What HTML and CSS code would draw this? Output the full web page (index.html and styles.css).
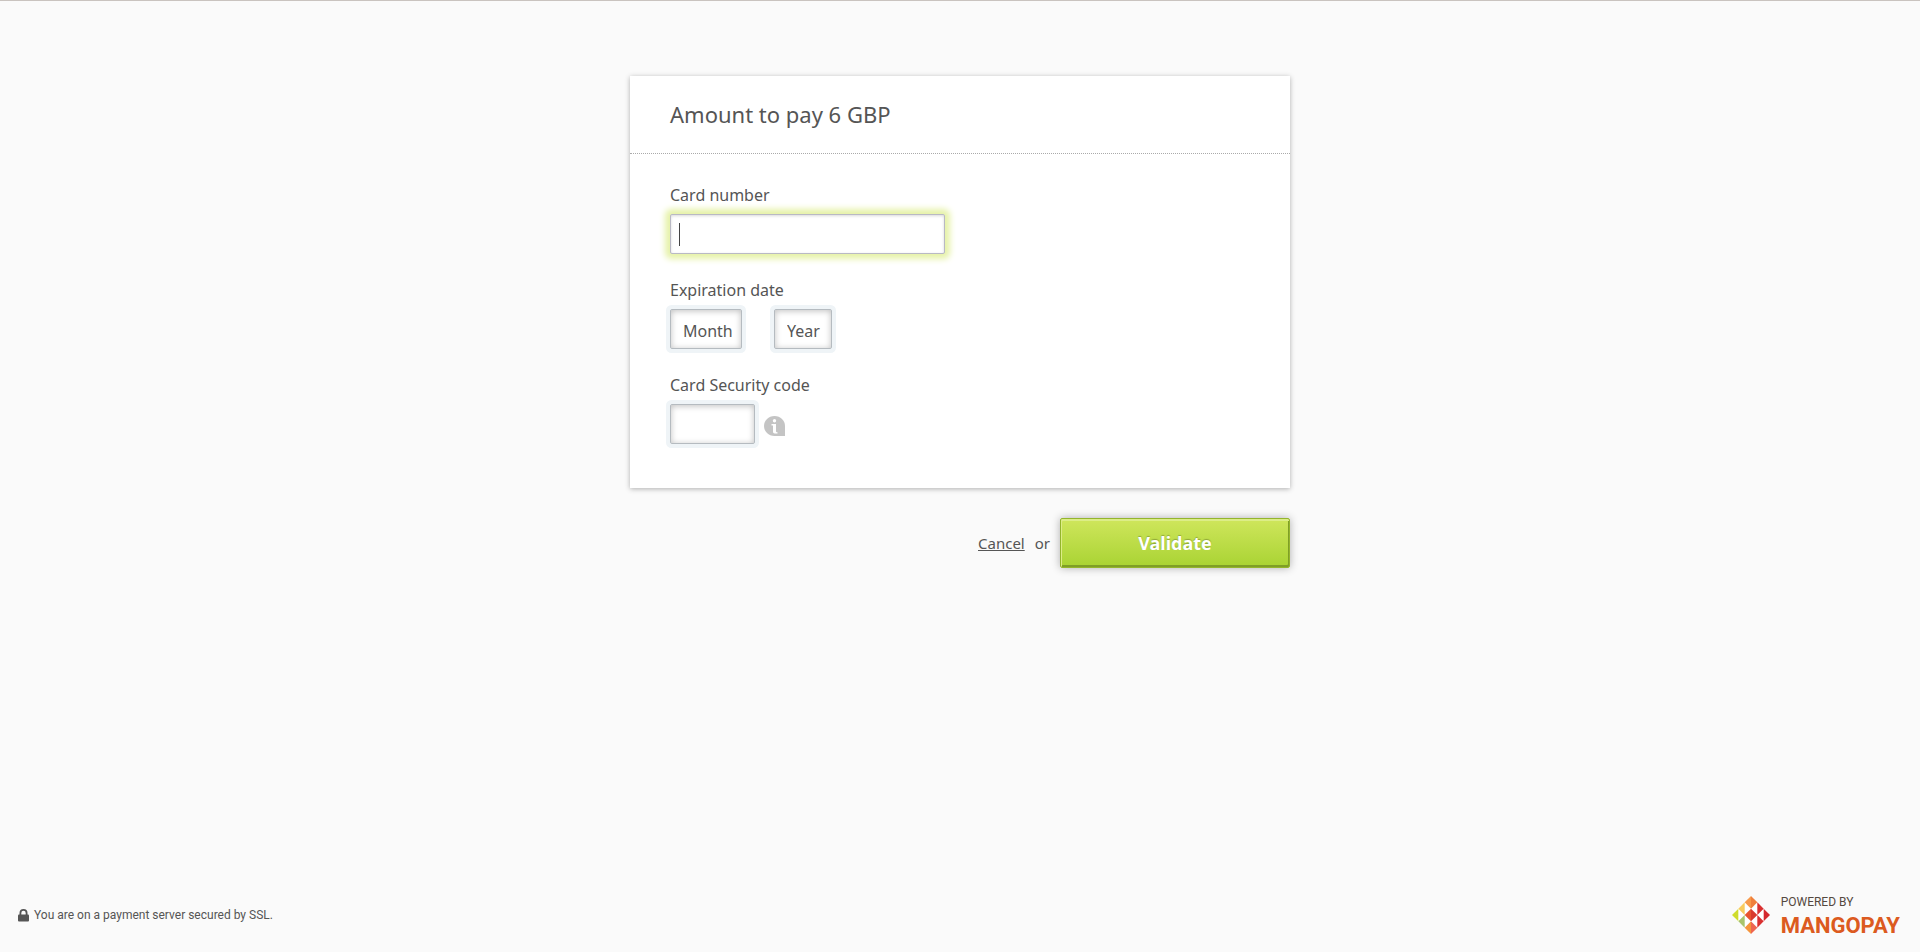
FILE: index.html
```html
<!DOCTYPE html>
<html lang="en">
<head>
    <meta charset="UTF-8">
    <meta name="viewport" content="width=device-width, initial-scale=1.0">
    <title>Payment</title>
    <link rel="stylesheet" href="styles.css">
</head>
<body>
    <main class="payment">
        <form id="payment-form">
            <div class="card">
                <h1 class="card-title">Amount to pay 6 GBP</h1>
                <div class="card-body">
                    <div class="field">
                        <label for="card-number">Card number</label>
                        <input class="input number" type="text" id="card-number" autocomplete="off" autofocus>
                    </div>
                    <div class="field">
                        <label for="month">Expiration date</label>
                        <div class="row dates">
                            <select class="input month" id="month">
                                <option>Month</option>
                                <option>01</option>
                                <option>02</option>
                                <option>03</option>
                                <option>04</option>
                                <option>05</option>
                                <option>06</option>
                                <option>07</option>
                                <option>08</option>
                                <option>09</option>
                                <option>10</option>
                                <option>11</option>
                                <option>12</option>
                            </select>
                            <select class="input year" id="year" aria-label="Year">
                                <option>Year</option>
                            </select>
                        </div>
                    </div>
                    <div class="field">
                        <label for="code">Card Security code</label>
                        <div class="row">
                            <input class="input code" type="text" id="code" maxlength="4" autocomplete="off">
                            <svg class="info" viewBox="0 0 21 20" width="21" height="20" aria-hidden="true">
                                <path fill="#c4c4c4" d="M10.5 0C16.5 0 21 4.5 21 10V20H10.5C4.5 20 0 15.5 0 10S4.5 0 10.5 0Z"/>
                                <circle fill="#fff" cx="10.5" cy="4.7" r="1.7"/>
                                <path fill="#fff" d="M7.5 8H12V15.2C12 16 12.5 16.3 13.5 16.3V17.5H10.8C9.5 17.5 9 16.8 9 15.5V9.5H7.5Z"/>
                            </svg>
                        </div>
                    </div>
                </div>
            </div>
            <div class="actions">
                <a class="cancel" href="#">Cancel</a>
                <span>or</span>
                <button class="validate" type="submit">Validate</button>
            </div>
        </form>
    </main>

    <footer class="footer">
        <p class="secure">
            <svg class="lock" viewBox="0 0 11 13" width="11" height="13" aria-hidden="true">
                <path fill="none" stroke="#555" stroke-width="1.8" d="M2.4 6V4A3.1 3.1 0 0 1 8.6 4V6"/>
                <rect fill="#555" y="5.5" width="11" height="7" rx="1"/>
            </svg>
            You are on a payment server secured by SSL.
        </p>
        <div class="brand">
            <svg class="logo" viewBox="0 0 36 36" width="38" height="38" aria-hidden="true">
                <path fill="#fff" d="M18 0L36 18L18 36L0 18Z"/>
                <path fill="#f79a4b" d="M18 0V12L12 6Z"/>
                <path fill="#f0803c" d="M18 0V12L24 6Z"/>
                <path fill="#f8cb5e" d="M12 6V18L6 12Z"/>
                <path fill="#d93030" d="M24 6V18L30 12Z"/>
                <path fill="#cfdc2e" d="M6 12V24L0 18Z"/>
                <path fill="#e8542f" d="M18 12V24L12 18Z"/>
                <path fill="#d93a2c" d="M18 12V24L24 18Z"/>
                <path fill="#d4282e" d="M30 12V24L36 18Z"/>
                <path fill="#a9c46c" d="M12 18V30L6 24Z"/>
                <path fill="#d93030" d="M24 18V30L30 24Z"/>
                <path fill="#f5943c" d="M18 24V36L12 30Z"/>
                <path fill="#ee6650" d="M18 24V36L24 30Z"/>
            </svg>
            <div class="brand-text">
                <span class="powered">POWERED BY</span>
                <strong class="name">MANGOPAY</strong>
            </div>
        </div>
    </footer>
</body>
</html>
```
FILE: styles.css
```css
* {
    margin: 0;
    padding: 0;
    box-sizing: border-box;
}
body {
    display: flex;
    flex-direction: column;
    min-height: 100vh;
    padding-top: 75px;
    border-top: 1px solid #c9c3bf;
    background: #fafafa;
    color: #555;
    font-family: "Noto Sans", sans-serif;
    font-size: 16px;
    line-height: 24px;
}
.payment {
    flex: 1;
    width: 100%;
    max-width: 660px;
    margin: 0 auto;
}
.card {
    background: #fff;
    box-shadow: 0 1px 5px rgba(0,0,0,0.3);
}
.card-title {
    padding: 22px 40px 23px;
    border-bottom: 1px dotted #aaa;
    font-size: 22px;
    font-weight: normal;
    line-height: 32px;
}
.card-body {
    padding: 29px 40px 44px;
}
.field + .field {
    margin-top: 24px;
}
.field label {
    display: block;
    margin-bottom: 7px;
}
.row {
    display: flex;
    align-items: center;
    gap: 9px;
}
.dates {
    gap: 32px;
}
.input {
    display: block;
    height: 40px;
    padding: 0 8px;
    border: 1px solid #b5bbc0;
    border-radius: 2px;
    outline: none;
    background: #fff;
    box-shadow: inset 0 1px 6px rgba(0,0,0,0.25), 0 0 0 4px #eff4f7;
    color: #555;
    font: inherit;
    appearance: none;
}
.input:focus {
    border-color: #b9b9c4;
    box-shadow: inset 0 1px 3px rgba(0,0,0,0.15), 0 0 6px 5px #e6f2a8;
}
.number {
    width: 275px;
    font-size: 18px;
}
/* text cursor of the empty field */
.number:focus {
    background: #fff linear-gradient(#444, #444) no-repeat 8px 8px / 1px 23px;
    caret-color: transparent;
}
.month { width: 72px; padding: 4px 0 0 12px; }
.year { width: 58px; padding: 4px 0 0 12px; }
.code { width: 85px; }
.info {
    margin-top: 4px;
}
.actions {
    display: flex;
    justify-content: flex-end;
    align-items: center;
    gap: 10px;
    margin-top: 30px;
    font-size: 15px;
}
.cancel {
    color: #555;
}
.validate {
    width: 230px;
    height: 50px;
    border: 1px solid #94b52c;
    border-radius: 2px;
    background: linear-gradient(#cfe65c, #a9d333);
    box-shadow: inset 1px 2px #dced87, inset -1px -2px #7f9f26, 0 0 9px rgba(0,0,0,0.3);
    color: #fff;
    font: bold 18px "Noto Sans", sans-serif;
    text-shadow: 0 -1px 1px rgba(0,0,0,0.25);
    cursor: pointer;
}
.footer {
    display: flex;
    justify-content: space-between;
    align-items: center;
    padding: 0 20px 13px 18px;
    font-family: Roboto, sans-serif;
}
.secure {
    display: flex;
    align-items: center;
    gap: 5px;
    font-size: 12px;
}
.brand {
    display: flex;
    align-items: center;
    gap: 11px;
}
.brand-text {
    display: flex;
    flex-direction: column;
}
.powered {
    color: #55493f;
    font-size: 12px;
    line-height: 22px;
}
.name {
    color: #dc5a20;
    font-size: 22px;
    line-height: 26px;
}
```
